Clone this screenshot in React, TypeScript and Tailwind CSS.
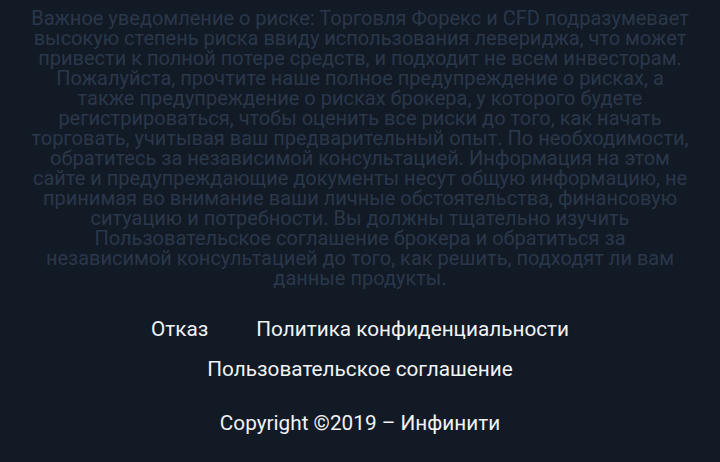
const lines = [
  'Важное уведомление о риске: Торговля Форекс и CFD подразумевает',
  'высокую степень риска ввиду использования левериджа, что может',
  'привести к полной потере средств, и подходит не всем инвесторам.',
  'Пожалуйста, прочтите наше полное предупреждение о рисках, а',
  'также предупреждение о рисках брокера, у которого будете',
  'регистрироваться, чтобы оценить все риски до того, как начать',
  'торговать, учитывая ваш предварительный опыт. По необходимости,',
  'обратитесь за независимой консультацией. Информация на этом',
  'сайте и предупреждающие документы несут общую информацию, не',
  'принимая во внимание ваши личные обстоятельства, финансовую',
  'ситуацию и потребности. Вы должны тщательно изучить',
  'Пользовательское соглашение брокера и обратиться за',
  'независимой консультацией до того, как решить, подходят ли вам',
  'данные продукты.',
]

export default function App() {
  return (
    <div
      className="h-[462px] w-[720px] overflow-hidden bg-[#121a25]"
      style={{ fontFamily: 'Roboto, "Noto Sans", sans-serif' }}
    >
      {/* Risk warning */}
      <p className="px-[20px] pt-2 text-center text-[20px] leading-[20px] text-[#2a374a]">
        {lines.map((l, i) => (
          <span key={i} className="block whitespace-nowrap">
            {l}
          </span>
        ))}
      </p>

      {/* Footer links */}
      <div className="mt-[29px] flex flex-col items-center text-[20.75px] leading-[24px] text-[#f1f3f5]">
        <div className="flex gap-12">
          <a>Отказ</a>
          <a>Политика конфиденциальности</a>
        </div>
        <a className="mt-4">Пользовательское соглашение</a>
        <div className="mt-[30px]">Copyright ©2019 – Инфинити</div>
      </div>
    </div>
  )
}
